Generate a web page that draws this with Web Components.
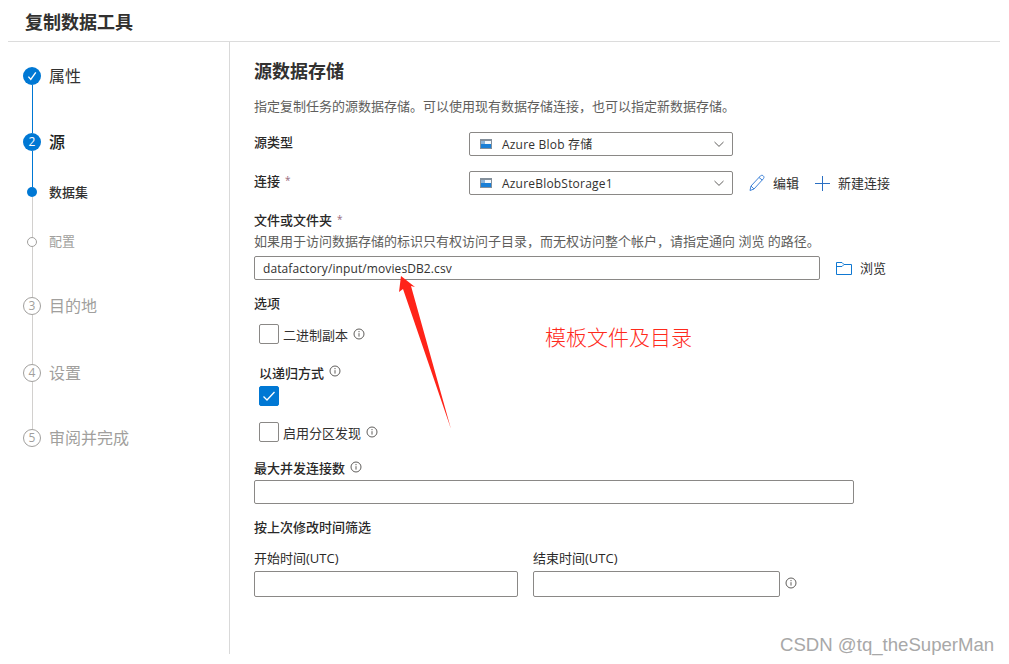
<!DOCTYPE html>
<html lang="zh">
<head>
<meta charset="utf-8">
<title>复制数据工具</title>
<style>
  html, body { margin: 0; padding: 0; background: #fff; }
  body {
    font-family: "Open Sans", "Noto Sans CJK SC", sans-serif;
    font-size: 13px;
    color: #323130;
    overflow: hidden;
  }
</style>
</head>
<body>
<copy-tool>
  <wizard-stepper slot="side">
    <wizard-step state="done" label="属性"></wizard-step>
    <wizard-step state="active" number="2" label="源" style="--step-h:54px"></wizard-step>
    <wizard-step state="sub-active" label="数据集" style="--step-h:50px"></wizard-step>
    <wizard-step state="sub" label="配置" style="--step-h:60px"></wizard-step>
    <wizard-step state="todo" number="3" label="目的地" style="--step-h:67px"></wizard-step>
    <wizard-step state="todo" number="4" label="设置" style="--step-h:65px"></wizard-step>
    <wizard-step state="todo" number="5" label="审阅并完成" last></wizard-step>
  </wizard-stepper>

  <source-form></source-form>
</copy-tool>

<script>
  const CJK = '"Open Sans", "Noto Sans CJK SC", sans-serif';

  class CopyTool extends HTMLElement {
    constructor() {
      super();
      this.attachShadow({ mode: 'open' });
      this.shadowRoot.innerHTML = `
        <style>
          :host { display: block; position: relative; height: 664px; padding: 0 9px 0 8px; box-sizing: border-box; }
          header {
            height: 41px; border-bottom: 1px solid #dcdcdc; padding-left: 17px;
            font: 600 18px/44px ${CJK}; color: #323130;
          }
          .body { display: flex; height: 612px; }
          .side { width: 221px; border-right: 1px solid #d9d9d9; flex: none; }
          .main { flex: 1; padding-left: 24px; }
          .note {
            position: absolute; left: 545px; top: 321px;
            font: 300 21px/30px "Noto Sans CJK SC", sans-serif; color: #ff2a1c;
          }
          .mark {
            position: absolute; left: 780px; top: 634px; white-space: nowrap;
            font: 400 18.6px/22px "Liberation Sans", sans-serif; color: #a8a8a8;
          }
          svg.arrow { position: absolute; left: 390px; top: 270px; }
        </style>
        <header>复制数据工具</header>
        <div class="body">
          <div class="side"><slot name="side"></slot></div>
          <div class="main"><slot></slot></div>
        </div>
        <svg class="arrow" width="70" height="165" viewBox="390 270 70 165">
          <polygon fill="#ff2419" points="401,276 415,287 411,286 451,429 403,289 399,292"/>
        </svg>
        <div class="note">模板文件及目录</div>
        <div class="mark">CSDN @tq_theSuperMan</div>
      `;
    }
  }

  class WizardStepper extends HTMLElement {
    constructor() {
      super();
      this.attachShadow({ mode: 'open' });
      this.shadowRoot.innerHTML = `
        <style>:host { display: flex; flex-direction: column; padding: 25px 0 0 15px; }</style>
        <slot></slot>
      `;
    }
  }

  class WizardStep extends HTMLElement {
    constructor() {
      super();
      this.attachShadow({ mode: 'open' });
    }

    connectedCallback() {
      const state = this.getAttribute('state');
      const number = this.getAttribute('number') || '';
      const label = this.getAttribute('label');
      const small = state === 'sub' || state === 'sub-active';
      const check = `<svg width="12" height="12" viewBox="0 0 12 12"><path d="M2.4 6.6 L4.8 9.4 L9.8 2.4" fill="none" stroke="#fff" stroke-width="1.4"/></svg>`;
      this.shadowRoot.innerHTML = `
        <style>
          :host { display: flex; height: var(--step-h, 66px); }
          .rail { width: 18px; flex: none; display: flex; flex-direction: column; align-items: center; }
          .mark {
            width: 18px; height: 18px; border-radius: 50%; box-sizing: border-box; flex: none;
            display: flex; align-items: center; justify-content: center;
            font: 400 12px/1 "Open Sans", sans-serif;
          }
          .done .mark, .active .mark { background: #0078d4; color: #fff; }
          .todo .mark { border: 1px solid #a19f9d; color: #a19f9d; }
          .sub-active .mark { width: 10px; height: 10px; background: #0078d4; }
          .sub .mark { width: 10px; height: 10px; border: 1px solid #a19f9d; }
          .line { width: 1px; flex: 1; background: #d2d0ce; margin-left: 1px; }
          .done .line, .active .line { background: #0078d4; }
          .text { margin-left: 8px; font: 400 16px/18px ${CJK}; color: #323130; white-space: nowrap; }
          .active .text { color: #201f1e; font-weight: 500; }
          .todo .text { color: #a19f9d; }
          .small .text { font-size: 13px; line-height: 10px; }
          .sub-active .text { font-weight: 500; color: #323130; }
          .sub .text { color: #a19f9d; margin-top: -1px; }
          .wrap { display: flex; height: 100%; }
        </style>
        <div class="wrap ${state} ${small ? 'small' : ''}">
          <div class="rail">
            <div class="mark">${state === 'done' ? check : number}</div>
            ${this.hasAttribute('last') ? '' : '<div class="line"></div>'}
          </div>
          <div class="text">${label}</div>
        </div>
      `;
    }
  }

  class InfoIcon extends HTMLElement {
    constructor() {
      super();
      this.attachShadow({ mode: 'open' });
      this.shadowRoot.innerHTML = `
        <style>:host { display: inline-flex; width: 12px; height: 12px; flex: none; } svg { display: block; }</style>
        <svg width="12" height="12" viewBox="0 0 12 12" fill="none" stroke="#605e5c">
          <circle cx="6" cy="6" r="5"/>
          <path d="M6 5.2 V8.6 M6 3 V4.2"/>
        </svg>
      `;
    }
  }

  class FieldLabel extends HTMLElement {
    constructor() {
      super();
      this.attachShadow({ mode: 'open' });
      this.shadowRoot.innerHTML = `
        <style>
          :host { display: flex; align-items: center; height: 18px; font: 500 13px/18px ${CJK}; color: #292827; white-space: nowrap; }
          :host([plain]) { font-weight: 400; }
          .req { color: #96697c; margin: -2px 0 0 5px; font-size: 10px; font-weight: 400; }
          info-icon { margin: -5px 0 0 5px; }
          :host([raised]) info-icon { margin-top: -3px; }
        </style>
        <slot></slot>
        ${this.hasAttribute('required') ? '<span class="req">*</span>' : ''}
        ${this.hasAttribute('info') ? '<info-icon></info-icon>' : ''}
      `;
    }
  }

  class TextBox extends HTMLElement {
    constructor() {
      super();
      this.attachShadow({ mode: 'open' });
      this.shadowRoot.innerHTML = `
        <style>
          :host {
            display: flex; align-items: center; box-sizing: border-box; height: var(--box-h, 24px);
            width: var(--box-w, 100%); border: 1px solid #8a8886; border-radius: 2px; background: #fff;
            padding: 1px 0 0 8px; font: 400 12px/18px ${CJK}; letter-spacing: .1px; color: #323130; flex: none;
          }
        </style>
        <slot></slot>
      `;
    }
  }

  class ComboBox extends HTMLElement {
    constructor() {
      super();
      this.attachShadow({ mode: 'open' });
      this.shadowRoot.innerHTML = `
        <style>
          :host {
            display: flex; align-items: center; box-sizing: border-box; height: 24px; width: 264px; flex: none;
            border: 1px solid #8a8886; border-radius: 2px; padding: 0 7px 0 10px;
            font: 400 12px/18px ${CJK}; letter-spacing: .2px; color: #323130;
          }
          .txt { flex: 1; margin: 2px 0 0 10px; white-space: nowrap; }
          svg { display: block; flex: none; }
        </style>
        <svg width="12" height="10" viewBox="0 0 12 10">
          <rect x="0" y="0" width="12" height="10" fill="#84909c"/>
          <rect x="1" y="2" width="10" height="7" fill="#f4f7fa"/>
          <rect x="1" y="2" width="4" height="3" fill="#8db4d8"/>
          <rect x="1" y="5" width="10" height="4" fill="#1a7fd6"/>
        </svg>
        <span class="txt"><slot></slot></span>
        <svg width="12" height="12" viewBox="0 0 12 12"><path d="M1.5 4 L6 8.4 L10.5 4" fill="none" stroke="#605e5c"/></svg>
      `;
    }
  }

  class ActionLink extends HTMLElement {
    static get icons() {
      return {
        edit: '<svg width="16" height="18" viewBox="0 0 16 18" fill="none" stroke="#3f83d8"><path d="M1 16.5 L2 12 L11.5 1.8 C12.5 1 14 1.2 14.6 2.2 C15.2 3.2 15 4 14.3 4.8 L5 15 Z M2 12 L5 15 M10 3.5 L13.2 6"/></svg>',
        add: '<svg width="15" height="15" viewBox="0 0 15 15" stroke="#2a6fc2"><path d="M7.5 0 V15 M0 7.5 H15"/></svg>',
        folder: '<svg width="16" height="13" viewBox="0 0 16 13" fill="none" stroke="#0f78d2"><path d="M.5 12.5 V.5 H6 L8 2.5 H15.5 V12.5 Z M.5 4.5 H6 L8 2.5"/></svg>'
      };
    }

    constructor() {
      super();
      this.attachShadow({ mode: 'open' });
      this.shadowRoot.innerHTML = `
        <style>
          :host { display: inline-flex; align-items: center; gap: var(--link-gap, 8px); font: 400 13px/18px ${CJK}; color: #323130; white-space: nowrap; flex: none; }
          svg { display: block; flex: none; }
        </style>
        ${ActionLink.icons[this.getAttribute('icon')]}
        <slot></slot>
      `;
    }
  }

  class CheckBox extends HTMLElement {
    constructor() {
      super();
      this.attachShadow({ mode: 'open' });
      this.shadowRoot.innerHTML = `
        <style>
          :host { display: flex; align-items: center; height: 20px; margin-left: 5px; font: 400 13px/18px ${CJK}; color: #323130; white-space: nowrap; }
          .box { width: 20px; height: 20px; box-sizing: border-box; border: 1px solid #8a8886; border-radius: 2px; flex: none; display: flex; align-items: center; justify-content: center; }
          :host([checked]) .box { background: #0078d4; border-color: #0078d4; }
          .label { margin: 2px 0 0 4px; }
          info-icon { margin: 0 0 0 5px; }
        </style>
        <div class="box">${this.hasAttribute('checked') ? '<svg width="14" height="14" viewBox="0 0 14 14"><path d="M1.5 7.5 L5 11 L12.5 3" fill="none" stroke="#fff" stroke-width="1.3"/></svg>' : ''}</div>
        <span class="label"><slot></slot></span>
        ${this.hasAttribute('info') ? '<info-icon></info-icon>' : ''}
      `;
    }
  }

  class SourceForm extends HTMLElement {
    constructor() {
      super();
      this.attachShadow({ mode: 'open' });
      this.shadowRoot.innerHTML = `
        <style>
          :host { display: block; padding-top: 17px; font: 400 13px/18px ${CJK}; }
          h2 { margin: 0; font: 600 18px/24px ${CJK}; color: #323130; }
          .hint { color: #605e5c; white-space: nowrap; height: 18px; }
          .row { display: flex; align-items: center; }
          .row field-label { width: 215px; flex: none; margin-top: -4px; }
          .row action-link { margin-left: 16px; }
          .row action-link + action-link { margin-left: 16px; }
          .dates { display: flex; gap: 15px; align-items: flex-end; }
          .dates > div { display: flex; flex-direction: column; gap: 4px; }
          .dates info-icon { margin: 0 0 8px -10px; }
        </style>
        <h2>源数据存储</h2>
        <div class="hint" style="margin-top:14px">指定复制任务的源数据存储。可以使用现有数据存储连接，也可以指定新数据存储。</div>

        <div class="row" style="margin-top:17px">
          <field-label>源类型</field-label>
          <combo-box>Azure Blob 存储</combo-box>
        </div>
        <div class="row" style="margin-top:15px">
          <field-label required>连接</field-label>
          <combo-box>AzureBlobStorage1</combo-box>
          <action-link icon="edit">编辑</action-link>
          <action-link icon="add">新建连接</action-link>
        </div>

        <field-label required style="margin-top:16px">文件或文件夹</field-label>
        <div class="hint" style="margin-top:3px">如果用于访问数据存储的标识只有权访问子目录，而无权访问整个帐户，请指定通向 浏览 的路径。</div>
        <div class="row" style="margin-top:6px">
          <text-box style="--box-w:566px">datafactory/input/moviesDB2.csv</text-box>
          <action-link icon="folder">浏览</action-link>
        </div>

        <field-label style="margin-top:14px">选项</field-label>
        <check-box info style="margin-top:12px">二进制副本</check-box>
        <field-label info style="margin:20px 0 0 5px">以递归方式</field-label>
        <check-box checked style="margin-top:4px"></check-box>
        <check-box info style="margin-top:16px">启用分区发现</check-box>

        <field-label info raised style="margin-top:17px">最大并发连接数</field-label>
        <text-box style="--box-w:600px;margin-top:3px"></text-box>

        <field-label style="margin-top:14px">按上次修改时间筛选</field-label>
        <div class="dates" style="margin-top:13px">
          <div><field-label plain>开始时间(UTC)</field-label><text-box style="--box-w:264px;--box-h:26px"></text-box></div>
          <div><field-label plain>结束时间(UTC)</field-label><text-box style="--box-w:247px;--box-h:26px"></text-box></div>
          <info-icon></info-icon>
        </div>
      `;
    }
  }

  customElements.define('copy-tool', CopyTool);
  customElements.define('wizard-stepper', WizardStepper);
  customElements.define('wizard-step', WizardStep);
  customElements.define('info-icon', InfoIcon);
  customElements.define('field-label', FieldLabel);
  customElements.define('text-box', TextBox);
  customElements.define('combo-box', ComboBox);
  customElements.define('action-link', ActionLink);
  customElements.define('check-box', CheckBox);
  customElements.define('source-form', SourceForm);
</script>
</body>
</html>
